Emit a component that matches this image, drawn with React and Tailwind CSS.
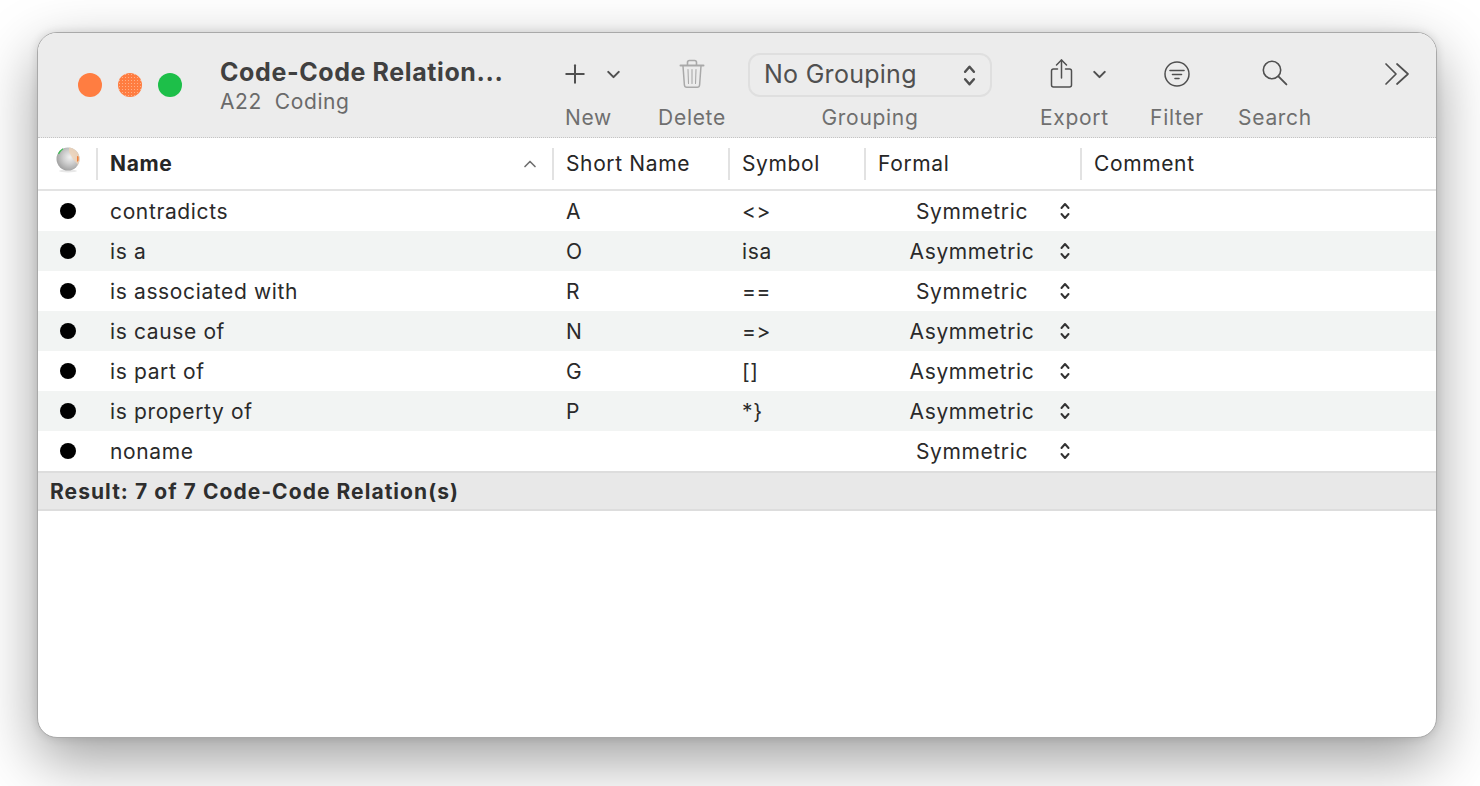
import React from 'react'
import { Plus, ChevronDown, ChevronUp } from 'lucide-react'

const rows = [
  { name: 'contradicts', short: 'A', symbol: '<>', formal: 'Symmetric' },
  { name: 'is a', short: 'O', symbol: 'isa', formal: 'Asymmetric' },
  { name: 'is associated with', short: 'R', symbol: '==', formal: 'Symmetric' },
  { name: 'is cause of', short: 'N', symbol: '=>', formal: 'Asymmetric' },
  { name: 'is part of', short: 'G', symbol: '[]', formal: 'Asymmetric' },
  { name: 'is property of', short: 'P', symbol: '*}', formal: 'Asymmetric' },
  { name: 'noname', short: '', symbol: '', formal: 'Symmetric' },
]

const UpDown = ({ className }) => (
  <svg viewBox="0 0 12 20" className={className} fill="none" stroke="currentColor" strokeWidth="2" strokeLinecap="round" strokeLinejoin="round">
    <path d="M2.5 7 6 3l3.5 4" />
    <path d="M2.5 13 6 17l3.5-4" />
  </svg>
)

const TrashIcon = () => (
  <svg viewBox="0 0 26 30" className="w-[26px] h-[30px] text-[#a9a9a9]" fill="none" stroke="currentColor" strokeLinecap="round" strokeLinejoin="round">
    <path d="M1.5 6.5h23" strokeWidth="2" />
    <path d="M8.5 6V3.5a2 2 0 0 1 2-2h5a2 2 0 0 1 2 2V6" strokeWidth="1.6" />
    <path d="M4 7l1.4 19a2.4 2.4 0 0 0 2.4 2.2h10.4a2.4 2.4 0 0 0 2.4-2.2L22 7" strokeWidth="1.5" />
    <path d="M9 10.5l.5 14M13 10.5v14M17 10.5l-.5 14" strokeWidth="1.1" />
  </svg>
)

const ShareIcon = () => (
  <svg viewBox="0 0 26 32" className="w-[26px] h-[32px] text-[#505050]" fill="none" stroke="currentColor" strokeWidth="1.5" strokeLinecap="round" strokeLinejoin="round">
    <path d="M8.5 11H4.5a2 2 0 0 0-2 2v14a2 2 0 0 0 2 2h16a2 2 0 0 0 2-2V13a2 2 0 0 0-2-2h-4" />
    <path d="M12.5 20V2" />
    <path d="M7.5 7l5-5 5 5" />
  </svg>
)

const FilterIcon = () => (
  <svg viewBox="0 0 28 28" className="w-[28px] h-[28px] text-[#505050]" fill="none" stroke="currentColor" strokeLinecap="round">
    <circle cx="14" cy="14" r="12" strokeWidth="1.5" />
    <path d="M7 10.5h14M9.5 14.5h9M12 18.5h4" strokeWidth="1.6" />
  </svg>
)

const SearchIcon = () => (
  <svg viewBox="0 0 26 26" className="w-[26px] h-[26px] text-[#505050]" fill="none" stroke="currentColor" strokeWidth="1.6" strokeLinecap="round">
    <circle cx="10" cy="10" r="8.7" />
    <path d="M16.4 16.4 24.4 24.4" strokeWidth="1.9" />
  </svg>
)

const Chevrons = () => (
  <svg viewBox="0 0 26 24" className="w-[26px] h-[24px] text-[#505050]" fill="none" stroke="currentColor" strokeWidth="1.7" strokeLinecap="round" strokeLinejoin="round">
    <path d="M2 2l10 10L2 22" />
    <path d="M13 2l11 10-11 10" />
  </svg>
)

// little coloured sphere in the first column
const Ball = () => (
  <svg viewBox="0 0 24 26" className="w-[24px] h-[26px]">
    <defs>
      <radialGradient id="ball" cx="0.58" cy="0.42" r="0.6">
        <stop offset="0" stopColor="#f1f1f1" />
        <stop offset="0.5" stopColor="#cdcdcd" />
        <stop offset="1" stopColor="#a2a2a2" />
      </radialGradient>
    </defs>
    <ellipse cx="12" cy="24" rx="9" ry="1.5" fill="#e8e8e8" />
    <circle cx="12" cy="12" r="11.5" fill="url(#ball)" />
    <path d="M13 .6A11.5 11.5 0 0 1 22 18L17 12 13 5z" fill="#efd3b8" opacity="0.8" />
    <path d="M21 9l1.6 0.5v4l-1.6 1.5z" fill="#f0803c" />
    <path d="M2.5 7A11.5 11.5 0 0 1 7 1.8" fill="none" stroke="#3fbf55" strokeWidth="1.2" />
  </svg>
)

const Label = ({ children, className = '' }) => (
  <div className={`text-[21px] leading-[26px] tracking-[0.033em] text-[#6f6f6f] ${className}`}>{children}</div>
)

const HeadCell = ({ children, className }) => (
  <div className={`h-[32px] flex items-center border-l-2 border-[#e2e2e2] pl-[11px] ${className}`}>{children}</div>
)

export default function App() {
  return (
    <div className="w-[1480px] h-[786px] overflow-hidden bg-white pl-[37px] pt-[32px] font-['Inter',sans-serif] [font-feature-settings:'calt'_0]">
      <div className="w-[1400px] h-[706px] rounded-[20px] overflow-hidden bg-white border border-[#a9a9a9] shadow-[0_22px_60px_rgba(0,0,0,0.38),0_0_10px_rgba(0,0,0,0.12)]">
        {/* toolbar */}
        <div className="h-[105px] bg-[#ececec] border-b border-dotted border-[#c4c4c4] flex">
          <div className="w-[182px] flex gap-[16px] pl-[40px] pt-[40px]">
            <div className="w-[24px] h-[24px] rounded-full bg-[#ff7d41]" />
            <div className="w-[24px] h-[24px] rounded-full bg-[#ff7d41] bg-[radial-gradient(#ffb088_0.8px,transparent_0.8px)] bg-[length:3px_3px]" />
            <div className="w-[24px] h-[24px] rounded-full bg-[#1dbf49]" />
          </div>
          <div className="w-[344px] pt-[23px]">
            <div className="text-[25px] leading-[32px] tracking-[0.024em] font-bold text-[#404040] whitespace-nowrap">Code-Code Relation...</div>
            <div className="text-[21px] leading-[26px] tracking-[0.028em] text-[#6a6a6a] whitespace-pre pt-[1px]">A22  Coding</div>
          </div>
          <div className="w-[86px] flex flex-col pt-[21px]">
            <div className="h-[40px] flex items-center gap-[13px] -ml-[4px] text-[#505050]">
              <Plus size={30} strokeWidth={1.6} />
              <ChevronDown size={21} strokeWidth={2.4} />
            </div>
            <Label className="mt-[11px] pl-[1px]">New</Label>
          </div>
          <div className="w-[84px] flex flex-col items-center pt-[21px]">
            <div className="h-[40px] flex items-center"><TrashIcon /></div>
            <Label className="mt-[11px]">Delete</Label>
          </div>
          <div className="w-[244px] ml-[14px] flex flex-col items-center pt-[20px]">
            <div className="w-[244px] h-[44px] rounded-[12px] border-2 border-[#dfdfdf] flex items-center justify-between pl-[14px] pr-[13px] text-[#505050]">
              <span className="text-[25px] tracking-[0.011em]">No Grouping</span>
              <UpDown className="w-[15px] h-[25px]" />
            </div>
            <Label className="mt-[8px]">Grouping</Label>
          </div>
          <div className="w-[104px] ml-[48px] flex flex-col pt-[21px]">
            <div className="h-[40px] flex items-center gap-[14px] pl-[9px]">
              <ShareIcon />
              <ChevronDown size={21} strokeWidth={2.4} className="text-[#505050]" />
            </div>
            <Label className="mt-[11px]">Export</Label>
          </div>
          <div className="w-[74px] flex flex-col items-center pt-[21px] -ml-[4px]">
            <div className="h-[40px] flex items-center"><FilterIcon /></div>
            <Label className="mt-[11px]">Filter</Label>
          </div>
          <div className="w-[100px] ml-[11px] flex flex-col items-center pt-[21px]">
            <div className="h-[40px] flex items-center pb-[2px]"><SearchIcon /></div>
            <Label className="mt-[11px]">Search</Label>
          </div>
          <div className="ml-[59px] pt-[29px]"><Chevrons /></div>
        </div>
        {/* table header */}
        <div className="h-[53px] flex items-center border-b-2 border-[#e3e3e3] text-[21px] tracking-[0.03em] text-[#262626]">
          <div className="w-[58px] pl-[18px] -mt-[7px]"><Ball /></div>
          <HeadCell className="w-[456px] font-bold justify-between pl-[12px] pr-[12px]">
            Name
            <ChevronUp size={20} strokeWidth={2} className="text-[#6f6f6f]" />
          </HeadCell>
          <HeadCell className="w-[176px] pl-[12px]">Short Name</HeadCell>
          <HeadCell className="w-[136px] pl-[12px]">Symbol</HeadCell>
          <HeadCell className="w-[216px] pl-[12px]">Formal</HeadCell>
          <HeadCell className="flex-1 pl-[12px]">Comment</HeadCell>
        </div>
        {/* rows */}
        <div className="text-[21px] tracking-[0.03em] text-[#2a2a2a]">
          {rows.map((r, i) => (
            <div key={r.name} className={`h-[40px] flex items-center ${i % 2 === 1 ? 'bg-[#f2f4f3]' : 'bg-white'}`}>
              <div className="w-[72px] pl-[22px]">
                <div className="w-[16px] h-[16px] rounded-full bg-black" />
              </div>
              <div className="w-[456px] pt-[2px]">{r.name}</div>
              <div className="w-[176px] pt-[2px]">{r.short}</div>
              <div className="w-[136px] pt-[2px]">{r.symbol}</div>
              <div className="flex items-center">
                <span className="w-[170px] ml-[9px] pt-[2px] text-center">{r.formal}</span>
                <UpDown className="w-[12px] h-[20px] ml-[2px] text-[#333333]" />
              </div>
            </div>
          ))}
        </div>
        {/* result bar */}
        <div className="h-[40px] bg-[#e8e8e8] border-y-2 border-[#dddddd] flex items-center pl-[12px] pt-[2px] text-[21px] tracking-[0.05em] font-bold text-[#2e2e2e]">
          Result: 7 of 7 Code-Code Relation(s)
        </div>
      </div>
    </div>
  )
}
